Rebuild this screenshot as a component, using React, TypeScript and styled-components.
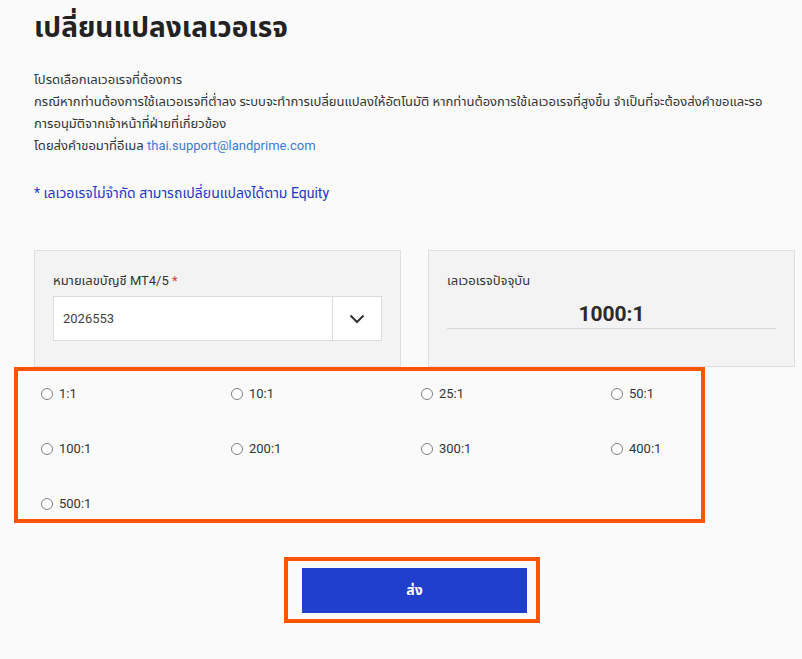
import { createGlobalStyle } from "styled-components";
import styled from "styled-components";

const GlobalStyle = createGlobalStyle`
  html, body {
    margin: 0;
    padding: 0;
    background: #fafafa;
  }
  body {
    font-family: Roboto, "Noto Sans", "Noto Sans Thai", "DejaVu Sans", sans-serif;
    color: #333;
  }
`;

const Page = styled.div`
  width: 802px;
  height: 659px;
  padding: 0 0 0 34px;
  box-sizing: border-box;
  overflow: hidden;
`;

const Title = styled.h1`
  margin: 0;
  padding-top: 10px;
  font-size: 28px;
  font-weight: 700;
  line-height: 36px;
  color: #222;
`;

const Intro = styled.div`
  margin-top: 23px;
  font-size: 13px;
  line-height: 22px;
  color: #333;
  white-space: nowrap;

  a {
    color: #3a7bd5;
    text-decoration: none;
  }
`;

const Note = styled.p`
  margin: 26px 0 0;
  font-size: 14px;
  line-height: 20px;
  color: #2237c8;
`;

const Cards = styled.div`
  display: grid;
  grid-template-columns: 367px 367px;
  gap: 27px;
  margin-top: 47px;
`;

const Card = styled.div`
  height: 117px;
  box-sizing: border-box;
  background: #f3f3f3;
  border: 1px solid #e0e0e0;
  padding: 20px 18px 0;
`;

const Label = styled.div`
  font-size: 13px;
  line-height: 20px;
  color: #333;

  span {
    color: #e53935;
  }
`;

const Select = styled.div`
  display: flex;
  margin-top: 5px;
  height: 45px;
  box-sizing: border-box;
  background: #fff;
  border: 1px solid #dcdcdc;
`;

const SelectValue = styled.div`
  flex: 1;
  display: flex;
  align-items: center;
  padding-left: 9px;
  font-size: 13px;
  color: #444;
`;

const SelectToggle = styled.div`
  width: 48px;
  border-left: 1px solid #dcdcdc;
  display: flex;
  align-items: center;
  justify-content: center;
  color: #333;
`;

const CurrentValue = styled.div`
  margin-top: 10px;
  padding-bottom: 1px;
  border-bottom: 1px solid #d8d8d8;
  text-align: center;
  font-size: 21px;
  font-weight: 700;
  line-height: 26px;
  color: #2a2a2a;
`;

const Options = styled.div`
  margin-left: -20px;
  width: 691px;
  box-sizing: border-box;
  border: 4px solid #ff5500;
  padding: 13px 0 0 23px;
  height: 156px;
  display: grid;
  grid-template-columns: repeat(4, 190px);
  grid-auto-rows: 55px;
`;

const Option = styled.label`
  display: flex;
  align-items: flex-start;
  gap: 6px;
  font-size: 13px;
  line-height: 20px;
  color: #333;
`;

const Radio = styled.span`
  margin-top: 4px;
  width: 12px;
  height: 12px;
  box-sizing: border-box;
  border: 1px solid #808080;
  border-radius: 50%;
  background: #fff;
`;

const SubmitWrap = styled.div`
  margin: 34px 0 0 250px;
  width: 256px;
  height: 66px;
  box-sizing: border-box;
  border: 4px solid #ff5500;
  padding: 7px 9px 0 14px;
`;

const SubmitButton = styled.button`
  width: 225px;
  height: 45px;
  border: none;
  background: #1f3fcc;
  color: #fff;
  font-family: inherit;
  font-size: 14px;
  font-weight: 700;
  cursor: pointer;
`;

const leverages = ["1:1", "10:1", "25:1", "50:1", "100:1", "200:1", "300:1", "400:1", "500:1"];

export default function App() {
  return (
    <>
      <GlobalStyle />
      <Page>
        <Title>เปลี่ยนแปลงเลเวอเรจ</Title>
        <Intro>
          โปรดเลือกเลเวอเรจที่ต้องการ
          <br />
          กรณีหากท่านต้องการใช้เลเวอเรจที่ต่ำลง ระบบจะทำการเปลี่ยนแปลงให้อัตโนมัติ หากท่านต้องการใช้เลเวอเรจที่สูงขึ้น จำเป็นที่จะต้องส่งคำขอและรอ
          <br />
          การอนุมัติจากเจ้าหน้าที่ฝ่ายที่เกี่ยวข้อง
          <br />
          โดยส่งคำขอมาที่อีเมล <a href="#">thai.support@landprime.com</a>
        </Intro>
        <Note>* เลเวอเรจไม่จำกัด สามารถเปลี่ยนแปลงได้ตาม Equity</Note>
        <Cards>
          <Card>
            <Label>
              หมายเลขบัญชี MT4/5 <span>*</span>
            </Label>
            <Select>
              <SelectValue>2026553</SelectValue>
              <SelectToggle>
                <svg width="16" height="10" viewBox="0 0 16 10" fill="none">
                  <path d="M1.5 1.5 L8 8 L14.5 1.5" stroke="#333" strokeWidth="2" />
                </svg>
              </SelectToggle>
            </Select>
          </Card>
          <Card>
            <Label>เลเวอเรจปัจจุบัน</Label>
            <CurrentValue>1000:1</CurrentValue>
          </Card>
        </Cards>
        <Options>
          {leverages.map((l) => (
            <Option key={l}>
              <Radio />
              {l}
            </Option>
          ))}
        </Options>
        <SubmitWrap>
          <SubmitButton>ส่ง</SubmitButton>
        </SubmitWrap>
      </Page>
    </>
  );
}
